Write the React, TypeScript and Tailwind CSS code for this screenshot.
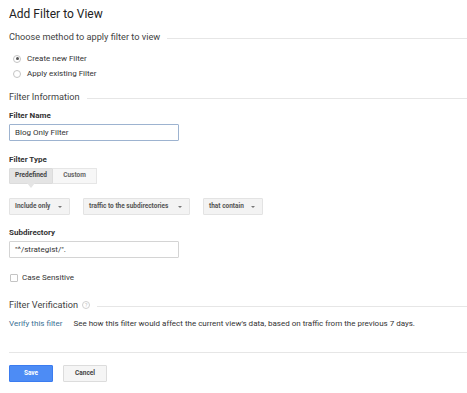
const font = { fontFamily: "Roboto, 'Liberation Sans', sans-serif" };

const SectionHeading = ({ children }: { children: React.ReactNode }) => (
  <div className="flex h-[12px] items-center gap-[7px] text-[9.2px] leading-[12px] text-[#444]">
    <span className="flex items-center gap-[4px] whitespace-nowrap">{children}</span>
    <div className="h-px flex-1 translate-y-[1px] bg-[#e6e6e6]" />
  </div>
);

const Label = ({ children, className }: { children: React.ReactNode; className: string }) => (
  <div className={`h-[10px] text-[8px] font-bold leading-[10px] text-[#333] ${className}`}>{children}</div>
);

const Radio = ({ checked, label }: { checked?: boolean; label: string }) => (
  <div className="flex h-[10px] items-center gap-[6px] pl-[4px] text-[8px] leading-[10px] text-[#333]">
    <span className="flex h-[8px] w-[8px] items-center justify-center rounded-full border border-[#c4c4c4] bg-white">
      {checked && <span className="h-[3px] w-[3px] rounded-full bg-[#555]" />}
    </span>
    <span>{label}</span>
  </div>
);

const Select = ({ label, width }: { label: string; width: string }) => (
  <div
    className={`flex h-[17px] items-center justify-between rounded-[1px] border border-[#e3e3e3] bg-[#f3f3f3] pl-[5px] pr-[7px] text-[6.5px] font-bold text-[#555] ${width}`}
  >
    <span>{label}</span>
    <span className="h-0 w-0 border-x-[2px] border-t-[2.5px] border-x-transparent border-t-[#777]" />
  </div>
);

export default function App() {
  return (
    <div className="h-[393px] w-[467px] overflow-hidden bg-white pl-[9px]" style={font}>
      <div className="pt-[6px]">
        <h1 className="h-[16px] text-[12px] leading-[16px] text-[#222]">Add Filter to View</h1>
      </div>

      <div className="mt-[9px]">
        <SectionHeading>Choose method to apply filter to view</SectionHeading>
      </div>

      <div className="mt-[10.5px] flex flex-col gap-[5px]">
        <Radio checked label="Create new Filter" />
        <Radio label="Apply existing Filter" />
      </div>

      <div className="mt-[12.5px]">
        <SectionHeading>Filter Information</SectionHeading>
      </div>

      <Label className="mt-[7.5px]">Filter Name</Label>
      <div className="mt-[3.5px] flex h-[17px] w-[170px] items-center rounded-[1px] border border-[#9db3d0] pl-[5px] text-[8px] text-[#333]">
        Blog Only Filter
      </div>

      <Label className="mt-[13.5px]">Filter Type</Label>
      <div className="relative mt-[3.5px] flex h-[16px] w-[88px] text-[6.5px] font-bold">
        <div className="flex w-[44px] items-center justify-center rounded-l-[1px] border border-[#dcdcdc] bg-[#e4e4e4] text-[#444]">
          Predefined
        </div>
        <div className="flex w-[44px] items-center justify-center rounded-r-[1px] border border-l-0 border-[#e6e6e6] bg-[#f7f7f7] text-[#666]">
          Custom
        </div>
        <span className="absolute left-[18px] top-[15px] h-0 w-0 border-x-[4px] border-t-[5px] border-x-transparent border-t-[#e4e4e4]" />
      </div>

      <div className="mt-[14px] flex gap-[13px]">
        <Select label="Include only" width="w-[61px]" />
        <Select label="traffic to the subdirectories" width="w-[107px]" />
        <Select label="that contain" width="w-[60px]" />
      </div>

      <Label className="mt-[12.5px]">Subdirectory</Label>
      <div className="mt-[3.5px] flex h-[17px] w-[170px] items-center rounded-[1px] border border-[#d4d4d4] pl-[5px] text-[8px] text-[#333]">
        "^/strategist/".
      </div>

      <div className="mt-[14.5px] flex h-[10px] items-center gap-[4px] pl-[1px] text-[8px] leading-[10px] text-[#333]">
        <span className="h-[8px] w-[8px] rounded-[1px] border border-[#c4c4c4] bg-white" />
        <span>Case Sensitive</span>
      </div>

      <div className="mt-[16.5px]">
        <SectionHeading>
          Filter Verification
          <span className="flex h-[8px] w-[8px] items-center justify-center rounded-full border border-[#d0d0d0] text-[5px] leading-none text-[#bbb]">
            ?
          </span>
        </SectionHeading>
      </div>

      <div className="mt-[7.5px] flex h-[10px] items-center gap-[11px] text-[8px] leading-[10px]">
        <span className="text-[#3a7094]">Verify this filter</span>
        <span className="text-[#333]">
          See how this filter would affect the current view's data, based on traffic from the previous 7 days.
        </span>
      </div>

      <div className="mt-[23.5px] h-px bg-[#e6e6e6]" />

      <div className="mt-[12px] flex gap-[10px] text-[6.5px] font-bold">
        <button className="flex h-[17px] w-[44px] items-center justify-center rounded-[1px] border border-[#3b7cf0] bg-[#4d8cf5] text-white">
          Save
        </button>
        <button className="flex h-[17px] w-[44px] items-center justify-center rounded-[1px] border border-[#dcdcdc] bg-[#f5f5f5] text-[#444]">
          Cancel
        </button>
      </div>
    </div>
  );
}
